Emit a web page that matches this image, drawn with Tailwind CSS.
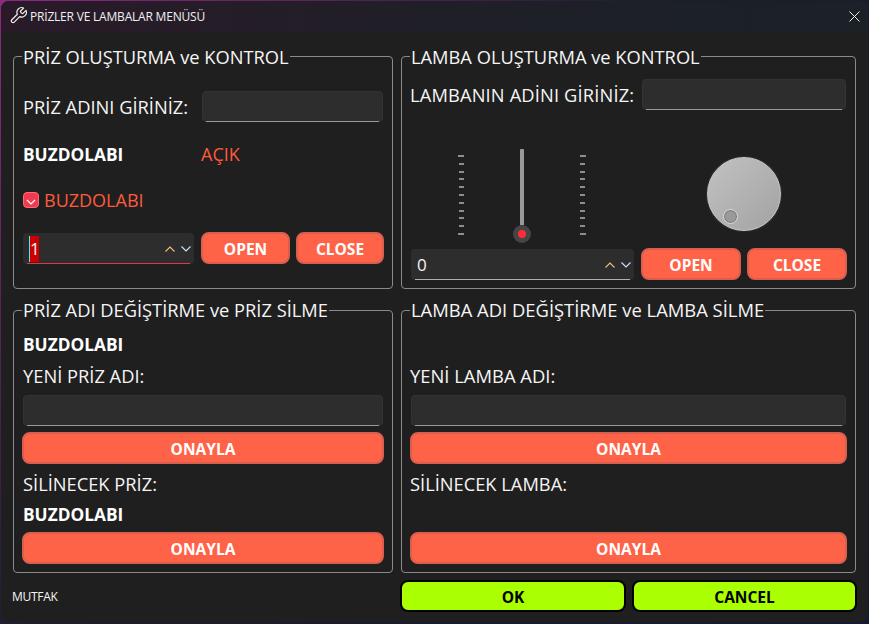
<!DOCTYPE html>
<html lang="tr">
<head>
<meta charset="utf-8">
<script src="https://cdn.jsdelivr.net/npm/@tailwindcss/browser@4"></script>
<title>PRİZLER VE LAMBALAR MENÜSÜ</title>
</head>
<body class="w-[869px] h-[624px] overflow-hidden bg-[linear-gradient(135deg,#8e2a80_0%,#1b1d2c_45%,#141a33_100%)] font-['Open_Sans',sans-serif] text-[#f5f5f5]">
<div class="mt-px ml-px w-[867px] h-[621px] rounded-lg overflow-hidden bg-[#1f1f1f] flex flex-col">
  <div class="h-[31px] shrink-0 flex items-center bg-gradient-to-r from-[#2a1a29] via-[#1f1f27] to-[#1a2127] pl-[8px] pr-[8px]">
    <svg class="-mt-[2px] w-[19px] h-[19px] text-[#f0f0f0]" viewBox="0 0 24 24" fill="none" stroke="currentColor" stroke-width="1.5" stroke-linecap="round" stroke-linejoin="round"><path d="M14.7 6.3a1 1 0 0 0 0 1.4l1.6 1.6a1 1 0 0 0 1.4 0l3.77-3.77a6 6 0 0 1-7.94 7.94l-6.91 6.91a2.12 2.12 0 0 1-3-3l6.91-6.91a6 6 0 0 1 7.94-7.94l-3.76 3.76z"/></svg>
    <span class="ml-[2px] text-[12px] tracking-[-0.2px] text-[#f0f0f0]">PRİZLER VE LAMBALAR MENÜSÜ</span>
    <svg class="ml-auto w-[11px] h-[11px]" viewBox="0 0 11 11" fill="none" stroke="#f0f0f0" stroke-width="1"><path d="M0.5 0.5l10 10M10.5 0.5l-10 10"/></svg>
  </div>

  <div class="flex-1 pl-[12px] pr-[11px] flex flex-col">
    <div class="flex gap-[8px] mt-[24px]">
      <!-- Priz create -->
      <section class="relative w-[380px] h-[233px] border border-[#8a8a8a] rounded-[4px] pl-[9px] pr-[9px]">
        <h2 class="absolute left-[8px] -top-[10px] bg-[#1f1f1f] px-px text-[18.3px] leading-[20px]">PRİZ OLUŞTURMA ve KONTROL</h2>
        <div class="mt-[34px] flex items-center h-[31px]">
          <span class="w-[179px] text-[18.3px]">PRİZ ADINI GİRİNİZ:</span>
          <div class="flex-1 h-[31px] bg-[#2d2d2d] rounded-[4px] border border-[#333] relative after:content-[''] after:absolute after:left-[3px] after:right-[3px] after:-bottom-px after:h-px after:bg-[#9a9a9a]"></div>
        </div>
        <div class="mt-[17px] flex items-center h-[30px]">
          <span class="w-[178px] pt-[2px] text-[17.3px] font-bold text-white">BUZDOLABI</span>
          <span class="text-[18px] text-[#ff5a3c]">AÇIK</span>
        </div>
        <div class="mt-[16px] flex items-center h-[30px]">
          <span class="w-[16px] h-[16px] rounded-[4px] bg-[#f03a50] border border-[#ff6a70] flex items-end justify-center pb-[2px]">
            <svg class="w-[10px] h-[6px]" viewBox="0 0 10 6" fill="none" stroke="#fff" stroke-width="1.2"><path d="M1 1l4 4 4-4"/></svg>
          </span>
          <span class="ml-[5px] text-[18px] text-[#ff5a3c]">BUZDOLABI</span>
        </div>
        <div class="mt-[17px] flex items-start h-[32px]">
          <div class="w-[171px] shrink-0 mt-px h-[31px] bg-[#2d2d2d] rounded-[4px] relative flex items-center pl-[6px] pr-[3px] after:content-[''] after:absolute after:left-[4px] after:right-[4px] after:bottom-0 after:h-px after:bg-[#e8343f]">
            <span class="bg-[#cc0000] border-l border-l-[#5fe6e6] w-[10px] h-[26px] text-[17px] leading-[26px] text-[#f4f4f4]">1</span>
            <svg class="ml-auto w-[10px] h-[6px]" viewBox="0 0 10 6" fill="none" stroke="#f2c078" stroke-width="1.1"><path d="M0.5 5.5l4.5-4.5 4.5 4.5"/></svg>
            <svg class="ml-[6px] w-[10px] h-[6px]" viewBox="0 0 10 6" fill="none" stroke="#cfe3ff" stroke-width="1.1"><path d="M0.5 0.5l4.5 4.5 4.5-4.5"/></svg>
          </div>
          <button class="ml-[7px] w-[89px] shrink-0 h-[32px] pt-[4px] rounded-[8px] bg-[#ff6347] border-2 border-[#d85e50] text-white font-bold text-[15.5px]">OPEN</button>
          <button class="ml-[6px] w-[88px] shrink-0 h-[32px] pt-[4px] rounded-[8px] bg-[#ff6347] border-2 border-[#d85e50] text-white font-bold text-[15.5px]">CLOSE</button>
        </div>
      </section>

      <!-- Lamba create -->
      <section class="relative w-[455px] h-[233px] border border-[#8a8a8a] rounded-[4px] pl-[9px] pr-[9px]">
        <h2 class="absolute left-[8px] -top-[10px] bg-[#1f1f1f] px-px text-[18.3px] leading-[20px]">LAMBA OLUŞTURMA ve KONTROL</h2>
        <div class="mt-[22px] flex items-center h-[31px]">
          <span class="w-[231px] -ml-px text-[18.3px] tracking-[0.15px]">LAMBANIN ADİNI GİRİNİZ:</span>
          <div class="flex-1 ml-px h-[31px] bg-[#2d2d2d] rounded-[4px] border border-[#333] relative after:content-[''] after:absolute after:left-[3px] after:right-[3px] after:-bottom-px after:h-px after:bg-[#9a9a9a]"></div>
        </div>
        <div class="mt-[39px] h-[96px] flex">
          <div class="w-[223px] flex">
            <div class="ml-[47px] mt-[6px] h-[80px] w-[6px] flex flex-col justify-between items-end">
              <i class="block w-[6px] h-[2px] bg-[#8e8e8e]"></i><i class="block w-[5px] h-[2px] bg-[#8e8e8e]"></i><i class="block w-[5px] h-[2px] bg-[#8e8e8e]"></i><i class="block w-[5px] h-[2px] bg-[#8e8e8e]"></i><i class="block w-[5px] h-[2px] bg-[#8e8e8e]"></i><i class="block w-[5px] h-[2px] bg-[#8e8e8e]"></i><i class="block w-[5px] h-[2px] bg-[#8e8e8e]"></i><i class="block w-[5px] h-[2px] bg-[#8e8e8e]"></i><i class="block w-[5px] h-[2px] bg-[#8e8e8e]"></i><i class="block w-[5px] h-[2px] bg-[#8e8e8e]"></i><i class="block w-[6px] h-[2px] bg-[#8e8e8e]"></i>
            </div>
            <div class="ml-[49px] w-[18px] flex flex-col items-center">
              <div class="w-[4px] h-[76px] bg-[#999] rounded-t-[1px]"></div>
              <div class="w-[18px] h-[18px] rounded-full bg-[#454545] flex items-center justify-center"><div class="w-[8px] h-[8px] rounded-full bg-[#ff2a3a]"></div></div>
            </div>
            <div class="ml-[49px] mt-[6px] h-[80px] w-[6px] flex flex-col justify-between items-start">
              <i class="block w-[6px] h-[2px] bg-[#8e8e8e]"></i><i class="block w-[5px] h-[2px] bg-[#8e8e8e]"></i><i class="block w-[5px] h-[2px] bg-[#8e8e8e]"></i><i class="block w-[5px] h-[2px] bg-[#8e8e8e]"></i><i class="block w-[5px] h-[2px] bg-[#8e8e8e]"></i><i class="block w-[5px] h-[2px] bg-[#8e8e8e]"></i><i class="block w-[5px] h-[2px] bg-[#8e8e8e]"></i><i class="block w-[5px] h-[2px] bg-[#8e8e8e]"></i><i class="block w-[5px] h-[2px] bg-[#8e8e8e]"></i><i class="block w-[5px] h-[2px] bg-[#8e8e8e]"></i><i class="block w-[6px] h-[2px] bg-[#8e8e8e]"></i>
            </div>
          </div>
          <div class="ml-[73px] mt-[8px] relative w-[74px] h-[74px] rounded-full border border-[#c8c8c8] bg-gradient-to-br from-[#c2c2c2] to-[#a2a2a2] shadow-[0_0_2px_#555]">
            <div class="absolute left-[15px] top-[51px] w-[15px] h-[15px] rounded-full bg-[#9a9a9a] border border-[#dcdcdc] shadow-[inset_0_0_0_1px_#777]"></div>
          </div>
        </div>
        <div class="mt-[3px] flex items-start h-[32px]">
          <div class="w-[223px] shrink-0 mt-px h-[31px] bg-[#2d2d2d] rounded-[4px] relative flex items-center pl-[6px] pr-[3px] after:content-[''] after:absolute after:left-[4px] after:right-[4px] after:bottom-0 after:h-px after:bg-[#b0b0b0]">
            <span class="text-[17px] leading-[26px] text-[#f4f4f4]">0</span>
            <svg class="ml-auto w-[10px] h-[6px]" viewBox="0 0 10 6" fill="none" stroke="#f2c078" stroke-width="1.1"><path d="M0.5 5.5l4.5-4.5 4.5 4.5"/></svg>
            <svg class="ml-[6px] w-[10px] h-[6px]" viewBox="0 0 10 6" fill="none" stroke="#cfe3ff" stroke-width="1.1"><path d="M0.5 0.5l4.5 4.5 4.5-4.5"/></svg>
          </div>
          <button class="ml-[7px] w-[100px] shrink-0 h-[32px] pt-[4px] rounded-[8px] bg-[#ff6347] border-2 border-[#d85e50] text-white font-bold text-[15.5px]">OPEN</button>
          <button class="ml-[6px] w-[100px] shrink-0 h-[32px] pt-[4px] rounded-[8px] bg-[#ff6347] border-2 border-[#d85e50] text-white font-bold text-[15.5px]">CLOSE</button>
        </div>
      </section>
    </div>

    <div class="flex gap-[8px] mt-[21px]">
      <!-- Priz edit -->
      <section class="relative w-[380px] h-[263px] border border-[#8a8a8a] rounded-[4px] pl-[9px] pr-[9px]">
        <h2 class="absolute left-[8px] -top-[11px] bg-[#1f1f1f] px-px text-[18.3px] leading-[20px]">PRİZ ADI DEĞİŞTİRME ve PRİZ SİLME</h2>
        <div class="mt-[18px] h-[30px] pt-[2px] flex items-center text-[17.3px] font-bold text-white">BUZDOLABI</div>
        <div class="mt-[2px] h-[30px] flex items-center text-[18.3px]">YENİ PRİZ ADI:</div>
        <div class="mt-[4px] h-[31px] bg-[#2d2d2d] rounded-[4px] border border-[#333] relative after:content-[''] after:absolute after:left-[3px] after:right-[3px] after:-bottom-px after:h-px after:bg-[#9a9a9a]"></div>
        <button class="block mt-[6px] -ml-px w-[362px] h-[32px] pt-[4px] rounded-[8px] bg-[#ff6347] border-2 border-[#d85e50] text-white font-bold text-[15.5px]">ONAYLA</button>
        <div class="mt-[5px] h-[30px] flex items-center text-[18.3px]">SİLİNECEK PRİZ:</div>
        <div class="h-[30px] pt-[2px] flex items-center text-[17.3px] font-bold text-white">BUZDOLABI</div>
        <button class="block mt-[3px] -ml-px w-[362px] h-[32px] pt-[4px] rounded-[8px] bg-[#ff6347] border-2 border-[#d85e50] text-white font-bold text-[15.5px]">ONAYLA</button>
      </section>

      <!-- Lamba edit -->
      <section class="relative w-[455px] h-[263px] border border-[#8a8a8a] rounded-[4px] pl-[9px] pr-[9px]">
        <h2 class="absolute left-[8px] -top-[11px] bg-[#1f1f1f] px-px text-[18.4px] leading-[20px]">LAMBA ADI DEĞİŞTİRME ve LAMBA SİLME</h2>
        <div class="mt-[50px] -ml-px h-[30px] flex items-center text-[18.4px]">YENİ LAMBA ADI:</div>
        <div class="mt-[4px] h-[31px] bg-[#2d2d2d] rounded-[4px] border border-[#333] relative after:content-[''] after:absolute after:left-[3px] after:right-[3px] after:-bottom-px after:h-px after:bg-[#9a9a9a]"></div>
        <button class="block mt-[6px] -ml-px w-[437px] h-[32px] pt-[4px] rounded-[8px] bg-[#ff6347] border-2 border-[#d85e50] text-white font-bold text-[15.5px]">ONAYLA</button>
        <div class="mt-[5px] -ml-px h-[30px] flex items-center text-[18.3px]">SİLİNECEK LAMBA:</div>
        <button class="block mt-[33px] -ml-px w-[437px] h-[32px] pt-[4px] rounded-[8px] bg-[#ff6347] border-2 border-[#d85e50] text-white font-bold text-[15.5px]">ONAYLA</button>
      </section>
    </div>

    <div class="flex items-center mt-[7px] h-[32px]">
      <span class="w-[388px] -ml-px pt-px text-[12px] tracking-[-0.3px]">MUTFAK</span>
      <button class="w-[226px] h-[32px] pt-[4px] rounded-[8px] bg-[#aaff00] border-2 border-black text-black font-bold text-[15.5px]">OK</button>
      <button class="ml-[6px] w-[225px] h-[32px] pt-[4px] rounded-[8px] bg-[#aaff00] border-2 border-black text-black font-bold text-[15.5px]">CANCEL</button>
    </div>
  </div>
</div>
</body>
</html>
